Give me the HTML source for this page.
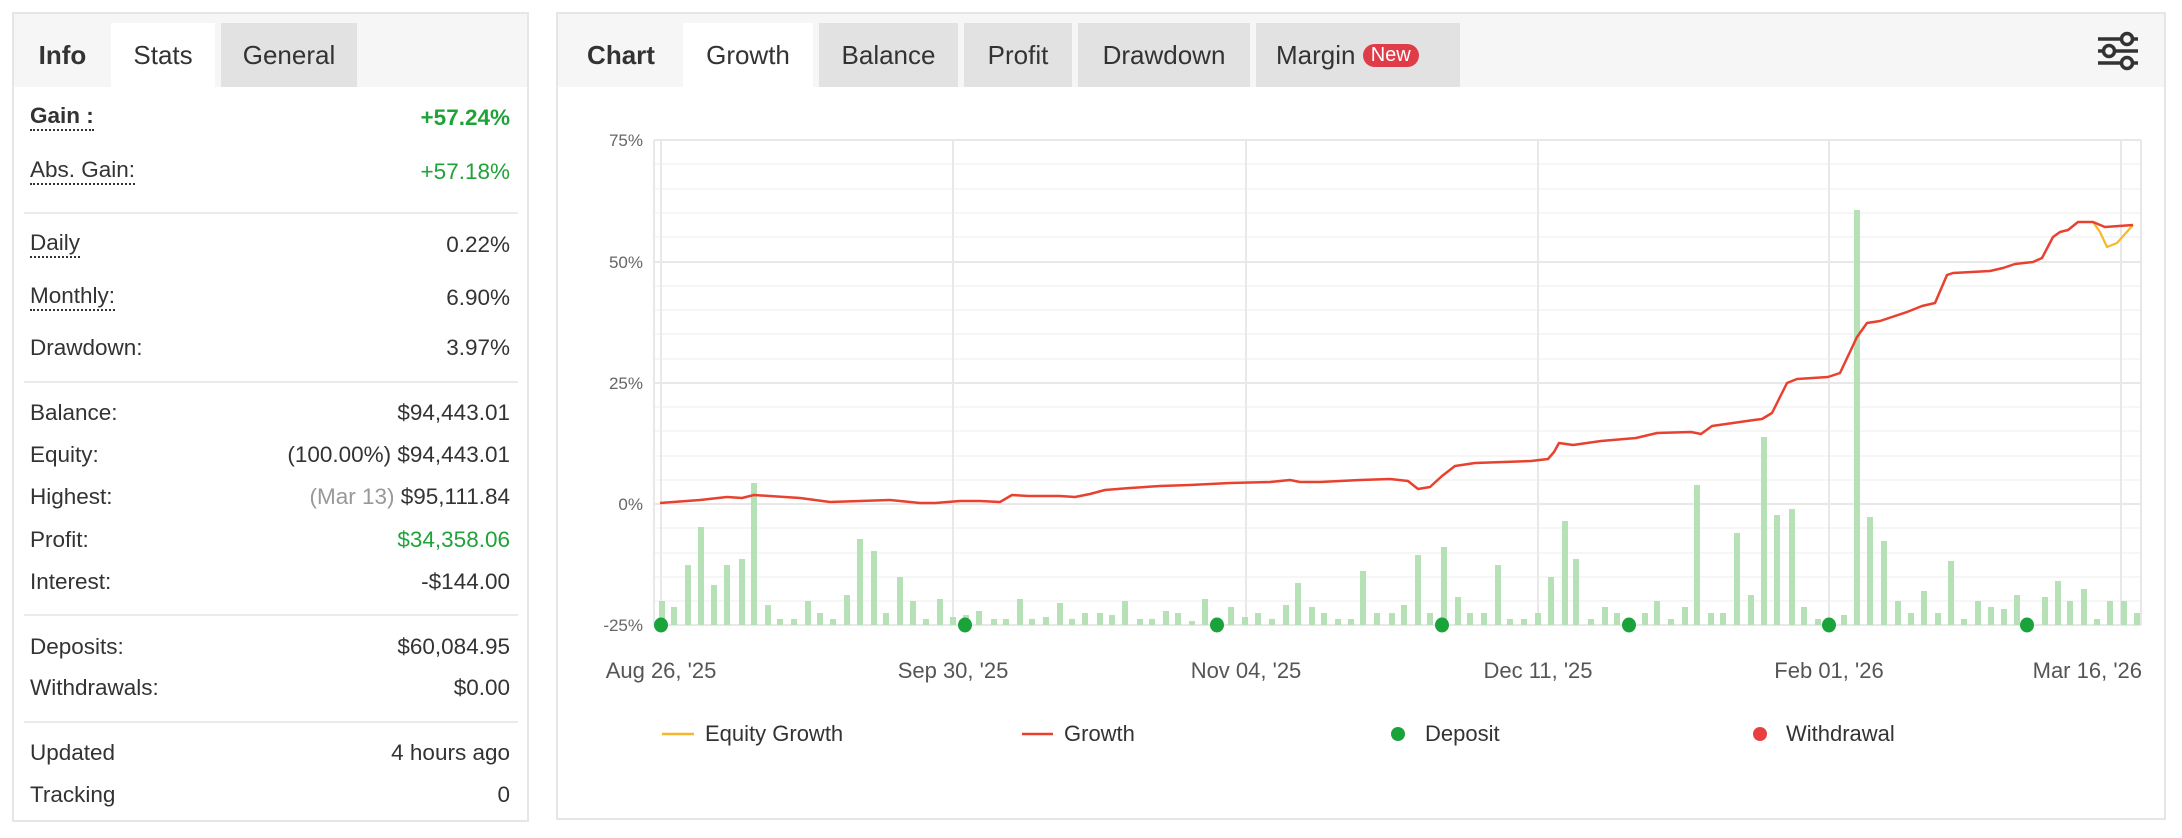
<!DOCTYPE html>
<html><head><meta charset="utf-8"><style>
*{margin:0;padding:0;box-sizing:border-box}
body{width:2182px;height:838px;background:#fff;font-family:"Liberation Sans",Arial,sans-serif;color:#333;position:relative;overflow:hidden}
.abs{position:absolute}
.panel{position:absolute;border:2px solid #e6e6e6;background:#fff}
.hdr{position:absolute;left:0;right:0;top:0;height:73px;background:#f6f6f6}
.tab{position:absolute;top:9px;height:64px;font-size:26px;line-height:64px;text-align:center;color:#333}
.row{position:absolute;left:30px;width:480px;font-size:22.5px;height:30px;line-height:30px}
.row .l{position:absolute;left:0}
.row .r{position:absolute;right:0}
.dot{border-bottom:2px dotted #333;line-height:26px;display:inline-block}
.div{position:absolute;left:24px;width:494px;height:2px;background:#ebebeb}
.g{color:#1fa339}
</style></head><body>

<div class="panel" style="left:12px;top:12px;width:517px;height:810px">
  <div class="hdr"></div>
  <div class="tab" style="left:0;width:97px;font-weight:bold">Info</div>
  <div class="tab" style="left:97px;width:104px;background:#fff">Stats</div>
  <div class="tab" style="left:207px;width:136px;background:#e2e2e2">General</div>
</div>

<div class="row" style="top:103px"><span class="l dot" style="font-weight:bold">Gain :</span><span class="r g" style="font-weight:bold">+57.24%</span></div>
<div class="row" style="top:157px"><span class="l dot">Abs. Gain:</span><span class="r g">+57.18%</span></div>
<div class="div" style="top:212px"></div>
<div class="row" style="top:230px"><span class="l dot">Daily</span><span class="r">0.22%</span></div>
<div class="row" style="top:283px"><span class="l dot">Monthly:</span><span class="r">6.90%</span></div>
<div class="row" style="top:333px"><span class="l">Drawdown:</span><span class="r">3.97%</span></div>
<div class="div" style="top:381px"></div>
<div class="row" style="top:398px"><span class="l">Balance:</span><span class="r">$94,443.01</span></div>
<div class="row" style="top:440px"><span class="l">Equity:</span><span class="r">(100.00%) $94,443.01</span></div>
<div class="row" style="top:482px"><span class="l">Highest:</span><span class="r"><span style="color:#999">(Mar 13)</span> $95,111.84</span></div>
<div class="row" style="top:525px"><span class="l">Profit:</span><span class="r g">$34,358.06</span></div>
<div class="row" style="top:567px"><span class="l">Interest:</span><span class="r">-$144.00</span></div>
<div class="div" style="top:614px"></div>
<div class="row" style="top:632px"><span class="l">Deposits:</span><span class="r">$60,084.95</span></div>
<div class="row" style="top:673px"><span class="l">Withdrawals:</span><span class="r">$0.00</span></div>
<div class="div" style="top:721px"></div>
<div class="row" style="top:738px"><span class="l">Updated</span><span class="r">4 hours ago</span></div>
<div class="row" style="top:780px"><span class="l">Tracking</span><span class="r">0</span></div>

<div class="panel" style="left:556px;top:12px;width:1610px;height:808px">
  <div class="hdr"></div>
  <div class="tab" style="left:1px;width:124px;font-weight:bold">Chart</div>
  <div class="tab" style="left:125px;width:130px;background:#fff">Growth</div>
  <div class="tab" style="left:261px;width:139px;background:#e2e2e2">Balance</div>
  <div class="tab" style="left:406px;width:108px;background:#e2e2e2">Profit</div>
  <div class="tab" style="left:520px;width:172px;background:#e2e2e2">Drawdown</div>
  <div class="tab" style="left:698px;width:204px;background:#e2e2e2;text-align:left;padding-left:20px">Margin <span style="display:inline-block;background:#e03c48;color:#fff;font-size:20px;line-height:23px;height:23px;padding:0 8px;border-radius:12px;vertical-align:3px">New</span></div>
</div>

<svg class="abs" style="left:0;top:0" width="2182" height="838">
  <g stroke="#333" stroke-width="3.5" fill="none">
    <line x1="2098" y1="39" x2="2138" y2="39"/><line x1="2098" y1="51" x2="2138" y2="51"/><line x1="2098" y1="63" x2="2138" y2="63"/>
    <circle cx="2127" cy="39" r="5.5" fill="#f6f6f6"/><circle cx="2109" cy="51" r="5.5" fill="#f6f6f6"/><circle cx="2127" cy="63" r="5.5" fill="#f6f6f6"/>
  </g>
  <g stroke="#f3f3f3" stroke-width="1.5">
    <line x1="654" x2="2141" y1="164" y2="164"/><line x1="654" x2="2141" y1="189" y2="189"/><line x1="654" x2="2141" y1="213" y2="213"/><line x1="654" x2="2141" y1="237" y2="237"/>
    <line x1="654" x2="2141" y1="286" y2="286"/><line x1="654" x2="2141" y1="310" y2="310"/><line x1="654" x2="2141" y1="334" y2="334"/><line x1="654" x2="2141" y1="359" y2="359"/>
    <line x1="654" x2="2141" y1="407" y2="407"/><line x1="654" x2="2141" y1="431" y2="431"/><line x1="654" x2="2141" y1="456" y2="456"/><line x1="654" x2="2141" y1="480" y2="480"/>
    <line x1="654" x2="2141" y1="528" y2="528"/><line x1="654" x2="2141" y1="553" y2="553"/><line x1="654" x2="2141" y1="577" y2="577"/><line x1="654" x2="2141" y1="601" y2="601"/>
  </g>
  <g stroke="#e8e8e8" stroke-width="2">
    <line x1="654" x2="2141" y1="140" y2="140"/><line x1="654" x2="2141" y1="262" y2="262"/><line x1="654" x2="2141" y1="383" y2="383"/><line x1="654" x2="2141" y1="504" y2="504"/><line x1="654" x2="2141" y1="625" y2="625"/>
    <line x1="654" x2="654" y1="140" y2="625"/><line x1="2141" x2="2141" y1="140" y2="625"/>
    <line x1="661" x2="661" y1="140" y2="625"/><line x1="953" x2="953" y1="140" y2="625"/><line x1="1246" x2="1246" y1="140" y2="625"/><line x1="1538" x2="1538" y1="140" y2="625"/><line x1="1829" x2="1829" y1="140" y2="625"/><line x1="2121" x2="2121" y1="140" y2="625"/>
  </g>
  <g font-size="17" fill="#666" text-anchor="end">
    <text x="643" y="146">75%</text><text x="643" y="268">50%</text><text x="643" y="389">25%</text><text x="643" y="510">0%</text><text x="643" y="631">-25%</text>
  </g>
  <g fill="#b6e1b7">
<rect x="659" y="601" width="6" height="24"/><rect x="671" y="607" width="6" height="18"/><rect x="685" y="565" width="6" height="60"/><rect x="698" y="527" width="6" height="98"/><rect x="711" y="585" width="6" height="40"/><rect x="724" y="565" width="6" height="60"/><rect x="739" y="559" width="6" height="66"/><rect x="751" y="483" width="6" height="142"/><rect x="765" y="605" width="6" height="20"/><rect x="777" y="619" width="6" height="6"/><rect x="791" y="619" width="6" height="6"/><rect x="805" y="601" width="6" height="24"/><rect x="817" y="613" width="6" height="12"/><rect x="830" y="619" width="6" height="6"/><rect x="844" y="595" width="6" height="30"/><rect x="857" y="539" width="6" height="86"/><rect x="871" y="551" width="6" height="74"/><rect x="883" y="613" width="6" height="12"/><rect x="897" y="577" width="6" height="48"/><rect x="910" y="601" width="6" height="24"/><rect x="923" y="619" width="6" height="6"/><rect x="937" y="599" width="6" height="26"/><rect x="950" y="617" width="6" height="8"/><rect x="963" y="615" width="6" height="10"/><rect x="976" y="611" width="6" height="14"/><rect x="991" y="619" width="6" height="6"/><rect x="1003" y="619" width="6" height="6"/><rect x="1017" y="599" width="6" height="26"/><rect x="1029" y="619" width="6" height="6"/><rect x="1043" y="617" width="6" height="8"/><rect x="1057" y="603" width="6" height="22"/><rect x="1069" y="619" width="6" height="6"/><rect x="1082" y="613" width="6" height="12"/><rect x="1097" y="613" width="6" height="12"/><rect x="1109" y="615" width="6" height="10"/><rect x="1122" y="601" width="6" height="24"/><rect x="1137" y="619" width="6" height="6"/><rect x="1149" y="619" width="6" height="6"/><rect x="1163" y="611" width="6" height="14"/><rect x="1175" y="613" width="6" height="12"/><rect x="1189" y="621" width="6" height="4"/><rect x="1202" y="599" width="6" height="26"/><rect x="1228" y="607" width="6" height="18"/><rect x="1242" y="617" width="6" height="8"/><rect x="1255" y="613" width="6" height="12"/><rect x="1269" y="619" width="6" height="6"/><rect x="1283" y="605" width="6" height="20"/><rect x="1295" y="583" width="6" height="42"/><rect x="1309" y="607" width="6" height="18"/><rect x="1321" y="613" width="6" height="12"/><rect x="1335" y="619" width="6" height="6"/><rect x="1348" y="619" width="6" height="6"/>
<rect x="1360" y="571" width="6" height="54"/><rect x="1374" y="613" width="6" height="12"/><rect x="1389" y="613" width="6" height="12"/><rect x="1401" y="605" width="6" height="20"/><rect x="1415" y="555" width="6" height="70"/><rect x="1427" y="613" width="6" height="12"/><rect x="1441" y="547" width="6" height="78"/><rect x="1455" y="597" width="6" height="28"/><rect x="1467" y="613" width="6" height="12"/><rect x="1481" y="613" width="6" height="12"/><rect x="1495" y="565" width="6" height="60"/><rect x="1507" y="619" width="6" height="6"/><rect x="1521" y="619" width="6" height="6"/><rect x="1535" y="613" width="6" height="12"/><rect x="1548" y="577" width="6" height="48"/><rect x="1562" y="521" width="6" height="104"/><rect x="1573" y="559" width="6" height="66"/><rect x="1588" y="619" width="6" height="6"/><rect x="1602" y="607" width="6" height="18"/><rect x="1614" y="613" width="6" height="12"/><rect x="1642" y="613" width="6" height="12"/><rect x="1654" y="601" width="6" height="24"/><rect x="1668" y="619" width="6" height="6"/><rect x="1682" y="607" width="6" height="18"/><rect x="1694" y="485" width="6" height="140"/><rect x="1708" y="613" width="6" height="12"/><rect x="1720" y="613" width="6" height="12"/><rect x="1734" y="533" width="6" height="92"/><rect x="1748" y="595" width="6" height="30"/><rect x="1761" y="437" width="6" height="188"/><rect x="1774" y="515" width="6" height="110"/><rect x="1789" y="509" width="6" height="116"/><rect x="1801" y="607" width="6" height="18"/><rect x="1815" y="619" width="6" height="6"/><rect x="1841" y="615" width="6" height="10"/><rect x="1854" y="210" width="6" height="415"/><rect x="1867" y="517" width="6" height="108"/><rect x="1881" y="541" width="6" height="84"/><rect x="1895" y="601" width="6" height="24"/><rect x="1908" y="613" width="6" height="12"/><rect x="1921" y="591" width="6" height="34"/><rect x="1935" y="613" width="6" height="12"/><rect x="1948" y="561" width="6" height="64"/><rect x="1961" y="619" width="6" height="6"/><rect x="1975" y="601" width="6" height="24"/><rect x="1988" y="607" width="6" height="18"/><rect x="2001" y="609" width="6" height="16"/><rect x="2014" y="595" width="6" height="30"/><rect x="2042" y="597" width="6" height="28"/><rect x="2055" y="581" width="6" height="44"/><rect x="2067" y="601" width="6" height="24"/><rect x="2081" y="589" width="6" height="36"/><rect x="2094" y="619" width="6" height="6"/><rect x="2107" y="601" width="6" height="24"/><rect x="2121" y="601" width="6" height="24"/><rect x="2134" y="613" width="6" height="12"/>
  </g>
  <path fill="none" stroke="#f5b82a" stroke-width="2.2" d="M2093,222 L2100,232 L2107,247 L2117,243 L2133,225"/>
  <path fill="none" stroke="#e8412f" stroke-width="2.5" stroke-linejoin="round" d="M660,503 L700,500 L727,497 L742,498 L754,495 L800,498 L830,502 L860,501 L890,500 L920,503 L935,503 L960,501 L980,501 L1000,502 L1012,495 L1028,496 L1060,496 L1075,497 L1090,494 L1105,490 L1130,488 L1160,486 L1190,485 L1230,483 L1270,482 L1290,480 L1300,482 L1320,482 L1360,480 L1390,479 L1408,481 L1418,489 L1430,487 L1442,476 L1455,466 L1475,463 L1531,461 L1548,459 L1554,452 L1559,443 L1573,445 L1601,441 L1636,438 L1657,433 L1691,432 L1701,434 L1712,426 L1754,420 L1762,419 L1772,413 L1787,383 L1797,379 L1828,377 L1840,373 L1857,337 L1867,323 L1880,321 L1907,312 L1922,306 L1935,303 L1947,275 L1953,273 L1990,271 L2003,268 L2015,264 L2033,262 L2042,258 L2053,237 L2060,232 L2068,230 L2078,222 L2093,222 L2105,227 L2133,225"/>
  <g fill="#1aa33a">
    <ellipse cx="661" cy="625" rx="7" ry="7.5"/><ellipse cx="965" cy="625" rx="7" ry="7.5"/><ellipse cx="1217" cy="625" rx="7" ry="7.5"/><ellipse cx="1442" cy="625" rx="7" ry="7.5"/><ellipse cx="1629" cy="625" rx="7" ry="7.5"/><ellipse cx="1829" cy="625" rx="7" ry="7.5"/><ellipse cx="2027" cy="625" rx="7" ry="7.5"/>
  </g>
  <g font-size="22" fill="#555" text-anchor="middle">
    <text x="661" y="678">Aug 26, '25</text><text x="953" y="678">Sep 30, '25</text><text x="1246" y="678">Nov 04, '25</text><text x="1538" y="678">Dec 11, '25</text><text x="1829" y="678">Feb 01, '26</text><text x="2142" y="678" text-anchor="end">Mar 16, '26</text>
  </g>
  <g font-size="22" fill="#333">
    <line x1="662" y1="734" x2="694" y2="734" stroke="#f5b82a" stroke-width="2.5"/><text x="705" y="741">Equity Growth</text>
    <line x1="1022" y1="734" x2="1053" y2="734" stroke="#e8412f" stroke-width="2.5"/><text x="1064" y="741">Growth</text>
    <circle cx="1398" cy="734" r="7" fill="#1aa33a"/><text x="1425" y="741">Deposit</text>
    <circle cx="1760" cy="734" r="7" fill="#e84040"/><text x="1786" y="741">Withdrawal</text>
  </g>
</svg>
</body></html>
